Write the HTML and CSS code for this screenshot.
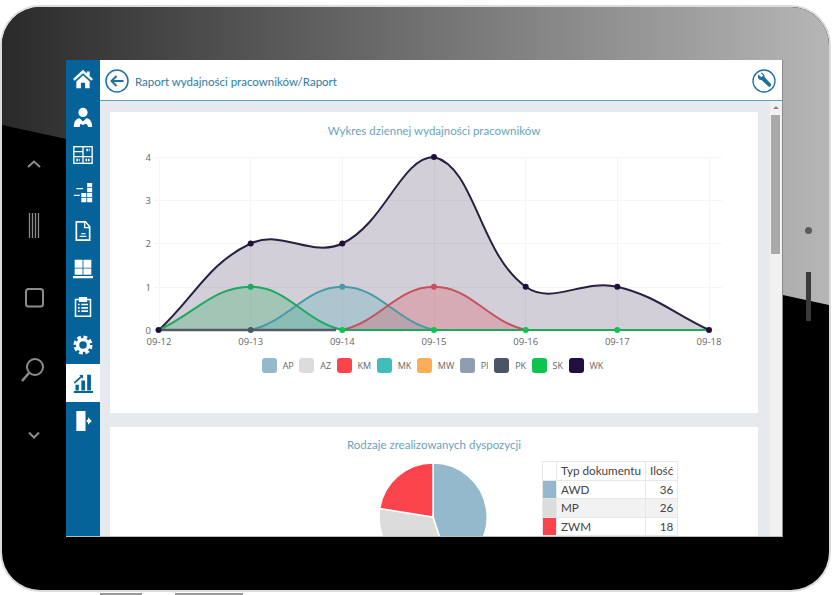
FILE: index.html
```html
<!DOCTYPE html>
<html lang="pl">
<head>
    <meta charset="UTF-8">
    <title>Raport wydajności pracowników</title>
    <link rel="stylesheet" href="styles.css">
</head>
<body>
    <div class="tablet">
        <div class="rail-left">
            <svg width="64" height="330" viewBox="2 0 64 330" fill="none" stroke="#8c8c8c" stroke-width="1.5">
                <path d="M28 11l6-5.500 6 5.500" stroke-width="2"/>
                <path d="M29.500 57v25M32.500 57v25M35.500 57v25M38.500 57v25" stroke-width="1.300"/>
                <rect x="26" y="133" width="17" height="17.500" rx="2.500" stroke-width="2"/>
                <circle cx="35" cy="211" r="8" stroke-width="2"/>
                <path d="M29 217l-7 8" stroke-width="2.500"/>
                <path d="M29 276.500l5 5 5-5" stroke-width="2"/>
            </svg>
        </div>

        <div class="screen">
            <nav class="sidebar">
                <a class="nav-item">
                    <svg viewBox="0 0 24 24" fill="#fff"><path d="M12 1L0 12l2 2L12 5l10 9 2-2-4-3.700V3h-3.500v2.500z"/><path d="M4 15l8-7.500 8 7.500v8h-5.500v-6.500h-5V23H4z"/></svg>
                </a>
                <a class="nav-item">
                    <svg viewBox="0 0 24 24" fill="#fff"><circle cx="12" cy="6.500" r="5.500"/><path d="M1 24c0-6.500 2.500-10 7-10.500l4 4 4-4c4.500.5 7 4 7 10.500h-5c0-2-1-3.500-3-4l-3 1.500-3-1.500-1 4z"/></svg>
                </a>
                <a class="nav-item">
                    <svg viewBox="0 0 24 24" fill="none" stroke="#fff" stroke-width="1.600"><rect x="1" y="2" width="22" height="20"/><path d="M1 14h22M12 2v20M1 8h11"/><path d="M16 6h4M4 18h4M15 18h5" stroke-width="3" stroke-dasharray="2 1"/></svg>
                </a>
                <a class="nav-item">
                    <svg viewBox="0 0 24 24" fill="#fff"><path d="M17 0h6v5h-6zM17 6h6v5h-6zM17 12h6v5h-6zM10 12h6v5h-6zM17 18h6v5h-6zM10 18h6v5h-6z"/><path d="M4 6h8v1.500H4zM1 14h7v1.500H1z"/></svg>
                </a>
                <a class="nav-item">
                    <svg viewBox="0 0 24 24" fill="none" stroke="#fff" stroke-width="2"><path d="M4 1h11l5 6v16H4z"/><path d="M14 1v7h6" stroke-width="1.600"/><path d="M10 15h5M8 18.500h8" stroke-width="1.500"/></svg>
                </a>
                <a class="nav-item">
                    <svg viewBox="0 0 24 24" fill="#fff"><path d="M2 1h9.500v9.500H2zM12.500 1H22v9.500h-9.500zM2 11.500h9.500V19H2zM12.500 11.500H22V19h-9.500zM0 20.500h24V23H0z"/></svg>
                </a>
                <a class="nav-item">
                    <svg viewBox="0 0 24 24" fill="none" stroke="#fff" stroke-width="1.800"><path d="M8 3H3v20h18V3h-5"/><path d="M8 1h8v4H8z" fill="#fff"/><path d="M6 9h2M10 9h8M6 13h2M10 13h8M6 17h2M10 17h8" stroke-width="2"/></svg>
                </a>
                <a class="nav-item">
                    <svg viewBox="0 0 24 24" fill="none" stroke="#fff"><circle cx="12" cy="12" r="9.500" stroke-width="4" stroke-dasharray="4.500 3"/><circle cx="12" cy="12" r="6.500" stroke-width="4"/></svg>
                </a>
                <a class="nav-item active">
                    <svg viewBox="0 0 24 24" fill="#06639a"><path d="M3 14h4v7H3zM10 9h4.500v12H10zM17 2h4.500v19H17zM1 21.500h23V24H1z"/><path d="M1 11l8-7-1.500-1.500H12V7l-1.500-1.500L2 13z"/></svg>
                </a>
                <a class="nav-item">
                    <svg viewBox="0 0 24 24" fill="#fff"><path d="M4 0h11v24H4z"/><path d="M16.500 10.500H18V7.500l4.500 4.500-4.500 4.500v-3h-1.500z"/></svg>
                </a>
            </nav>

            <div class="page">
                <header class="topbar">
                    <svg class="round-btn" width="24" height="24" viewBox="0 0 24 24" fill="none" stroke="#1f6f9e" stroke-width="1.500">
                        <circle cx="12" cy="12" r="11"/>
                        <path d="M18.500 12H6.500M11.500 7l-5 5 5 5" stroke-width="2"/>
                    </svg>
                    <h1 class="topbar-title">Raport wydajności pracowników/Raport</h1>
                    <svg class="round-btn" width="24" height="24" viewBox="0 0 24 24" fill="none" stroke="#1f6f9e" stroke-width="1.300">
                        <circle cx="12" cy="12" r="11"/>
                        <path d="M6.500 5.500l2.500 2.500 1.500-.5.500-1.500-2.500-2c2-.7 4.500 1.200 4 4l6.500 7c1 1.500-1 3.500-2.500 2.500l-7-6.500c-2.500.5-4.500-2-3-5.500z" fill="#1f6f9e" stroke="none"/>
                    </svg>
                </header>

                <div class="page-body">
                    <main class="content">
                        <section class="card card-line">
                            <h2 class="card-title">Wykres dziennej wydajności pracowników</h2>
                            <svg class="line-chart" width="648" height="215" viewBox="110 140 648 215">
                                <g stroke="#f5f5f5" stroke-width="1">
                                    <path d="M154 157.500H722M154 200.500H722M154 243.500H722M154 287.500H722M154 330.500H722"/>
                                    <path d="M159.500 157V335M250.500 157V335M342.500 157V335M434.500 157V335M525.500 157V335M617.500 157V335M709.500 157V335"/>
                                </g>

                                <path fill="#1f0f3d" fill-opacity=".2" d="M159,330 C195.68,295.4 208.25,263.53 250.7,243.5 C281.57,228.93 311.43,258.07 342.3,243.5 C384.75,223.47 401.54,157 434,157 C474.9,166.64 479.2,253.83 525.7,286.75 C552.52,305.73 582.51,278.54 617.3,286.75 C655.83,295.84 672.32,312.7 709,330Z"/>
                                <path fill="#12a850" fill-opacity=".25" d="M159,330 C195.68,312.7 214.04,286.75 250.7,286.75 C287.36,286.75 303.81,320.92 342.3,330Z"/>
                                <path fill="#3fa9b5" fill-opacity=".25" d="M250.7,330 C289.19,320.92 305.64,286.75 342.3,286.75 C378.96,286.75 395.5,320.92 434,330Z"/>
                                <path fill="#e8404d" fill-opacity=".25" d="M342.3,330 C380.79,320.92 397.34,286.75 434,286.75 C470.66,286.75 487.2,320.92 525.7,330Z"/>

                                <g fill="none" stroke-width="2">
                                    <path stroke="#2a1f40" d="M159,330 C195.68,295.4 208.25,263.53 250.7,243.5 C281.57,228.93 311.43,258.07 342.3,243.5 C384.75,223.47 401.54,157 434,157 C474.9,166.64 479.2,253.83 525.7,286.75 C552.52,305.73 582.51,278.54 617.3,286.75 C655.83,295.84 672.32,312.7 709,330"/>
                                    <path stroke="#4a9aa6" d="M250.7,330 C289.19,320.92 305.64,286.75 342.3,286.75 C378.96,286.75 395.5,320.92 434,330"/>
                                    <path stroke="#c2535f" d="M342.3,330 C380.79,320.92 397.34,286.75 434,286.75 C470.66,286.75 487.2,320.92 525.7,330"/>
                                    <path stroke="#1fa860" d="M159,330 C195.68,312.7 214.04,286.75 250.7,286.75 C287.36,286.75 303.81,320.92 342.3,330 L709,330"/>
                                    <path stroke="#555b66" stroke-width="2.500" d="M159,330H336"/>
                                </g>

                                <g fill="#1f0f3d">
                                    <circle cx="158.500" cy="330" r="3"/>
                                    <circle cx="250.700" cy="243.500" r="3"/>
                                    <circle cx="342.300" cy="243.500" r="3"/>
                                    <circle cx="434" cy="157" r="3"/>
                                    <circle cx="525.700" cy="286.750" r="3"/>
                                    <circle cx="617.300" cy="286.750" r="3"/>
                                    <circle cx="709" cy="330" r="3"/>
                                </g>
                                <circle cx="250.700" cy="330" r="3" fill="#4c5566"/>
                                <circle cx="250.700" cy="286.750" r="3" fill="#1fa860"/>
                                <circle cx="342.300" cy="286.750" r="3" fill="#4a9aa6"/>
                                <circle cx="434" cy="286.750" r="3" fill="#c9505c"/>
                                <g fill="#0fc350">
                                    <circle cx="342.300" cy="330" r="3"/>
                                    <circle cx="434" cy="330" r="3"/>
                                    <circle cx="525.700" cy="330" r="3"/>
                                    <circle cx="617.300" cy="330" r="3"/>
                                </g>

                                <g class="tick" text-anchor="end">
                                    <text x="151" y="161">4</text>
                                    <text x="151" y="204">3</text>
                                    <text x="151" y="247">2</text>
                                    <text x="151" y="291">1</text>
                                    <text x="151" y="334">0</text>
                                </g>
                                <g class="tick" text-anchor="middle">
                                    <text x="159" y="345">09-12</text>
                                    <text x="250.700" y="345">09-13</text>
                                    <text x="342.300" y="345">09-14</text>
                                    <text x="434" y="345">09-15</text>
                                    <text x="525.700" y="345">09-16</text>
                                    <text x="617.300" y="345">09-17</text>
                                    <text x="709" y="345">09-18</text>
                                </g>
                            </svg>
                            <ul class="legend">
                                <li><span class="swatch c-ap"></span>AP</li>
                                <li><span class="swatch c-az"></span>AZ</li>
                                <li><span class="swatch c-km"></span>KM</li>
                                <li><span class="swatch c-mk"></span>MK</li>
                                <li><span class="swatch c-mw"></span>MW</li>
                                <li><span class="swatch c-pi"></span>PI</li>
                                <li><span class="swatch c-pk"></span>PK</li>
                                <li><span class="swatch c-sk"></span>SK</li>
                                <li><span class="swatch c-wk"></span>WK</li>
                            </ul>
                        </section>

                        <section class="card card-pie">
                            <h2 class="card-title">Rodzaje zrealizowanych dyspozycji</h2>
                            <div class="pie-row">
                                <svg class="pie" width="112" height="112" viewBox="0 0 112 112" stroke="#fff" stroke-width="1.500">
                                    <path fill="#94b8cc" d="M56 56V2A54 54 0 0 1 72.700 107.400Z"/>
                                    <path fill="#dcdcdc" d="M56 56L72.700 107.400A54 54 0 0 1 2.700 47.500Z"/>
                                    <path fill="#fb434c" d="M56 56L2.700 47.500A54 54 0 0 1 56 2Z"/>
                                </svg>
                                <table class="doc-table">
                                    <tr>
                                        <th class="mark"></th>
                                        <th>Typ dokumentu</th>
                                        <th>Ilość</th>
                                    </tr>
                                    <tr>
                                        <td class="mark c-ap"></td>
                                        <td>AWD</td>
                                        <td class="num">36</td>
                                    </tr>
                                    <tr class="alt">
                                        <td class="mark c-az"></td>
                                        <td>MP</td>
                                        <td class="num">26</td>
                                    </tr>
                                    <tr>
                                        <td class="mark c-km"></td>
                                        <td>ZWM</td>
                                        <td class="num">18</td>
                                    </tr>
                                </table>
                            </div>
                        </section>
                    </main>

                    <div class="scrollbar">
                        <span class="scroll-arrow"></span>
                        <span class="scroll-thumb"></span>
                    </div>
                </div>
            </div>
        </div>

        <div class="rail-right">
            <span class="camera"></span>
            <span class="slot"></span>
        </div>
    </div>
    <div class="stubs">
        <span class="stub-a"></span>
        <span class="stub-b"></span>
    </div>
</body>
</html>
```

FILE: styles.css
```css
* {
    box-sizing: border-box;
}
html, body {
    height: 595px;
    overflow: hidden;
}
body {
    margin: 0;
    padding: 7px 3px 0 2px;
    background-color: #fff;
    font-family: Lato, "Open Sans", sans-serif;
    color: #444;
}
.tablet {
    position: relative;
    display: flex;
    width: 827px;
    height: 583px;
    padding-top: 53px;
    background-color: #000;
    border-radius: 38px;
    box-shadow: 0 0 0 2px #dcdcdc;
    overflow: hidden;
}
/* reflection on the glass, top right part */
.tablet::before {
    content: "";
    position: absolute;
    inset: 0;
    background: linear-gradient(90deg, #2a2a2a, #b6b6b6);
    clip-path: polygon(0 0, 100% 0, 100% 298px, 0 118px);
}
.rail-left {
    position: relative;
    flex: 0 0 64px;
    padding-top: 96px;
}
.rail-left svg {
    display: block;
}
.rail-right {
    position: relative;
    flex: 0 0 46px;
    display: flex;
    flex-direction: column;
    align-items: center;
    gap: 38px;
    padding-top: 167px;
    padding-right: 2px;
}
.camera {
    width: 7px;
    height: 7px;
    margin-left: 7px;
    border-radius: 50%;
    background-color: #5c5c5c;
}
.slot {
    width: 5px;
    height: 49px;
    margin-left: 7px;
    background-color: #3a3a3a;
}
.screen {
    position: relative;
    flex: 0 0 717px;
    display: flex;
    height: 477px;
    background-color: #fff;
    border-right: 1px solid #8a8a8a;
    border-bottom: 1px solid #bbb;
    overflow: hidden;
}

.sidebar {
    flex: 0 0 34px;
    background-color: #06639a;
}
.nav-item {
    display: flex;
    align-items: center;
    justify-content: center;
    height: 38px;
}
.nav-item svg {
    width: 20px;
    height: 20px;
}
.nav-item.active {
    background-color: #fff;
}

.page {
    flex: 1;
    display: flex;
    flex-direction: column;
    min-width: 0;
}
.topbar {
    flex: 0 0 41px;
    display: flex;
    align-items: center;
    padding: 2px 6px 0 5px;
    border-bottom: 1px solid #5f9db8;
}
.round-btn {
    flex: none;
}
.topbar-title {
    flex: 1;
    margin: 0 0 0 6px;
    font-size: 11.500px;
    font-weight: 400;
    color: #2b7ba6;
}
.page-body {
    flex: 1;
    display: flex;
    min-height: 0;
}
.content {
    flex: 0 0 670px;
    display: flex;
    flex-direction: column;
    gap: 14px;
    padding: 11px 12px 0 10px;
    background-color: #e6eaee;
    overflow: hidden;
}
.card {
    flex: none;
    background-color: #fff;
}
.card-line {
    height: 301px;
}
.card-pie {
    height: 160px;
}
.card-title {
    margin: 0;
    font-size: 11.500px;
    font-weight: 400;
    line-height: 16px;
    text-align: center;
    color: #6aa3bd;
}
.card-line .card-title {
    padding-top: 11px;
    height: 28px;
}
.line-chart {
    display: block;
}
.tick {
    font-family: "Open Sans", sans-serif;
    font-size: 9.500px;
    fill: #666;
}
.legend {
    display: flex;
    justify-content: center;
    gap: 5.500px;
    margin: 3px 0 0;
    padding: 0 3px 0 0;
    list-style: none;
    font-family: "Open Sans", sans-serif;
    font-size: 9px;
    line-height: 15px;
    color: #666;
}
.legend li {
    display: flex;
    align-items: center;
    gap: 6px;
}
.swatch {
    width: 15px;
    height: 15px;
    border-radius: 3px;
}
.c-ap { background-color: #94b8cc; }
.c-az { background-color: #dcdcdc; }
.c-km { background-color: #fb434c; }
.c-mk { background-color: #3fbcbc; }
.c-mw { background-color: #fdad55; }
.c-pi { background-color: #8f9db0; }
.c-pk { background-color: #4c5566; }
.c-sk { background-color: #0fc350; }
.c-wk { background-color: #21103f; }

.card-pie .card-title {
    padding-top: 10px;
    height: 34px;
}
.pie-row {
    display: flex;
    align-items: flex-start;
    padding-left: 267px;
}
.pie {
    flex: none;
}
.doc-table {
    flex: none;
    margin-left: 53px;
    border-collapse: collapse;
    font-size: 11.700px;
    line-height: 17.500px;
    white-space: nowrap;
    color: #444;
}
.doc-table th,
.doc-table td {
    padding: 0 4px;
    border: 1px solid #e8e8e8;
    font-weight: 400;
}
.doc-table th {
    text-align: left;
}
.doc-table .mark {
    width: 14px;
    padding: 0;
}
.doc-table .alt td:not(.mark) {
    background-color: #f2f2f2;
}
.doc-table .num {
    text-align: right;
}

.scrollbar {
    flex: 1;
    display: flex;
    flex-direction: column;
    align-items: flex-start;
    padding: 5px 0 0 1px;
    background-color: #f1f1f1;
}
.scroll-arrow {
    width: 0;
    height: 0;
    margin-left: 2px;
    border-left: 3px solid transparent;
    border-right: 3px solid transparent;
    border-bottom: 3px solid #888;
}
.scroll-thumb {
    width: 9px;
    height: 139px;
    margin-top: 6px;
    background-color: #a9a9a9;
}

.stubs {
    display: flex;
    gap: 33px;
    margin-top: 3px;
    padding-left: 98px;
}
.stubs span {
    height: 2px;
    background-color: #999;
}
.stub-a {
    width: 42px;
}
.stub-b {
    width: 68px;
}
```
